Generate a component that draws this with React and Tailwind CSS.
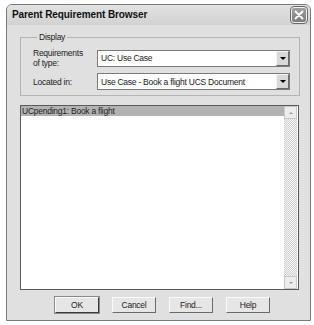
import React from "react";

const T = "text-[8.5px] leading-[10px] tracking-[-0.25px] text-[#222]";

function DropBtn() {
  return (
    <div className="w-[13px] h-[15px] bg-[#d9d9d9] border-t border-l border-t-[#f4f4f4] border-l-[#f4f4f4] border-r border-b border-r-[#6a6a6a] border-b-[#6a6a6a] flex items-center justify-center">
      <div className="w-0 h-0 border-l-[3px] border-r-[3px] border-t-[3px] border-l-transparent border-r-transparent border-t-black" />
    </div>
  );
}

function Combo({ text }) {
  return (
    <div className="w-[193px] h-[17px] bg-white border border-[#7a7a7a] flex items-center justify-between pl-[3px]">
      <span className={T + " whitespace-nowrap"}>{text}</span>
      <DropBtn />
    </div>
  );
}

function Btn({ children, def }) {
  return (
    <div
      className={
        "w-[44px] h-[16px] bg-[#e6e6e6] flex items-center justify-center border-t border-l border-t-[#fafafa] border-l-[#fafafa] border-r border-b " +
        T +
        " " +
        (def ? "border-r-[#3a3a3a] border-b-[#3a3a3a] outline outline-1 outline-[#8a8a8a]" : "border-r-[#6a6a6a] border-b-[#6a6a6a]")
      }
    >
      {children}
    </div>
  );
}

function ScrollBtn({ up }) {
  return (
    <div className="w-[13px] h-[13px] bg-[#ececec] border border-[#c8c8c8] flex items-center justify-center">
      <div
        className={
          "w-0 h-0 border-l-[2px] border-r-[2px] border-l-transparent border-r-transparent " +
          (up ? "border-b-[2px] border-b-[#9a9a9a]" : "border-t-[2px] border-t-[#9a9a9a]")
        }
      />
    </div>
  );
}

export default function App() {
  return (
    <div
      className="w-[314px] h-[325px] bg-white pt-[4px] pl-[6px] overflow-hidden"
      style={{ fontFamily: '"Liberation Sans", Arial, sans-serif' }}
    >
      <div className="w-[305px] h-[317px] border border-[#7a7a7a] rounded-t-[6px] bg-[#e0e0e0] flex flex-col overflow-hidden">
        {/* Title bar */}
        <div className="h-[20px] bg-gradient-to-b from-[#e2e2e2] to-[#d2d2d2] flex items-center justify-between pl-[5px] pr-[3px]">
          <span className="text-[10px] font-bold text-[#111] leading-[12px] tracking-[-0.1px]">
            Parent Requirement Browser
          </span>
          <div className="w-[16px] h-[16px] rounded-[3px] bg-gradient-to-b from-[#a0a0a0] to-[#7c7c7c] border border-[#f0f0f0] outline outline-1 outline-[#6a6a6a] flex items-center justify-center">
            <svg width="10" height="10" viewBox="0 0 10 10">
              <path d="M1.5 1.5 L8.5 8.5 M8.5 1.5 L1.5 8.5" stroke="white" strokeWidth="1.8" strokeLinecap="round" />
            </svg>
          </div>
        </div>

        {/* Body */}
        <div className="flex-1 pl-[13px] pr-[10px] pt-[7px] flex flex-col">
          <fieldset className="border border-[#b4b4b4] pl-[12px] pr-[7px] pt-[6px] pb-[5px] flex flex-col gap-[5px]">
            <legend className={"ml-[4px] px-[2px] " + T}>Display</legend>
            <div className="flex items-center">
              <div className={"w-[64px] " + T}>
                Requirements
                <br />
                of type:
              </div>
              <Combo text="UC: Use Case" />
            </div>
            <div className="flex items-center">
              <div className={"w-[64px] " + T}>Located in:</div>
              <Combo text="Use Case - Book a flight UCS Document" />
            </div>
          </fieldset>

          {/* List box */}
          <div className="mt-[9px] w-[279px] h-[185px] bg-white border border-[#5a5a5a] flex">
            <div className="flex-1 flex flex-col">
              <div className={"h-[10px] bg-[#b2b2b2] pl-[1px] whitespace-nowrap " + T}>
                UCpending1: Book a flight
              </div>
            </div>
            <div className="w-[13px] mr-[1px] flex flex-col bg-[repeating-conic-gradient(#cfcfcf_0%_25%,#f6f6f6_0%_50%)] bg-[length:2px_2px]">
              <ScrollBtn up />
              <div className="flex-1" />
              <ScrollBtn />
            </div>
          </div>

          {/* Buttons */}
          <div className="mt-[7px] flex gap-[13px] pl-[35px]">
            <Btn def>OK</Btn>
            <Btn>Cancel</Btn>
            <Btn>Find...</Btn>
            <Btn>Help</Btn>
          </div>
        </div>
      </div>
    </div>
  );
}
